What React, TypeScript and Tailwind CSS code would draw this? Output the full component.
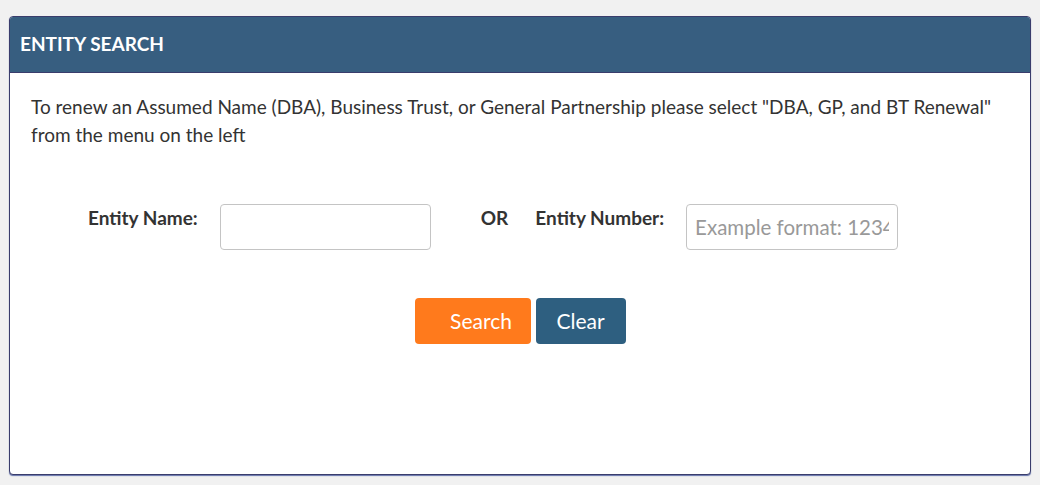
import React from 'react';

export default function App() {
  return (
    <div className="min-h-[485px] bg-[#f1f1f1] px-[9px] pt-[16px] pb-[9px] font-['Lato','Open_Sans',sans-serif]">
      <div className="flex h-[459px] flex-col overflow-hidden rounded-[4px] border border-[#3a3d6c] bg-white shadow-[0_1px_1px_rgba(40,60,140,0.7)]">
        {/* header */}
        <div className="flex h-[56px] items-center border-b border-[#3a3d6c] bg-[#375e80] px-[10px]">
          <h2 className="text-[19px] font-bold text-white">ENTITY SEARCH</h2>
        </div>

        <div className="px-[21px] pt-[20px]">
          <p className="text-[19px] leading-[28px] text-[#333]">
            To renew an Assumed Name (DBA), Business Trust, or General Partnership please select "DBA, GP, and BT Renewal" from the menu on the left
          </p>

          {/* search fields */}
          <div className="mt-[55px] flex items-start">
            <label className="ml-[57px] text-[19px] font-bold text-[#333]">Entity Name:</label>
            <input
              type="text"
              className="ml-[22px] h-[46px] w-[211px] rounded-[4px] border border-[#c4c4c4] px-[8px] text-[20px] outline-none"
            />
            <span className="ml-[50px] text-[19px] font-bold text-[#333]">OR</span>
            <label className="ml-[27px] text-[19px] font-bold text-[#333]">Entity Number:</label>
            <input
              type="text"
              placeholder="Example format: 1234567"
              className="ml-[22px] h-[46px] w-[212px] rounded-[4px] border border-[#c4c4c4] px-[8px] text-[20.5px] outline-none placeholder:text-[#999]"
            />
          </div>

          {/* actions */}
          <div className="mt-[48px] flex justify-center gap-[5px]">
            <button className="h-[46px] w-[116px] rounded-[4px] bg-[#ff7a1c] pl-[17px] text-[21px] text-white">
              Search
            </button>
            <button className="h-[46px] w-[90px] rounded-[4px] bg-[#2e5f80] text-[21px] text-white">
              Clear
            </button>
          </div>
        </div>
      </div>
    </div>
  );
}
